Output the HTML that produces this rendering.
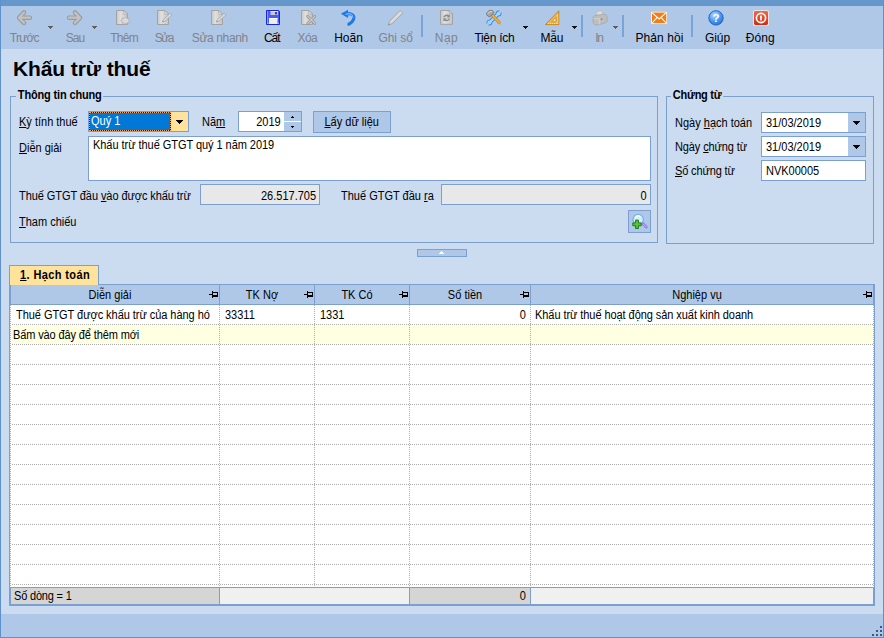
<!DOCTYPE html>
<html lang="vi">
<head>
<meta charset="utf-8">
<title>Khấu trừ thuế</title>
<style>
*{box-sizing:border-box;margin:0;padding:0}
html,body{width:884px;height:638px;overflow:hidden}
body{position:relative;background:#cbdcf1;font-family:"Liberation Sans","DejaVu Sans",sans-serif;font-size:12px;color:#000}
.abs{position:absolute}
#topbar{left:0;top:0;width:884px;height:6px;background:#6597ca}
#toolbar{left:0;top:6px;width:884px;height:43px;background:#afc8e8}
#lborder{left:0;top:0;width:1px;height:638px;background:#5e91c9}
#rborder{left:883px;top:0;width:1px;height:638px;background:#5e91c9}
#bborder{left:0;top:637px;width:884px;height:1px;background:#5e91c9}
#bottombar{left:0;top:614px;width:884px;height:24px;background:#afc8e8}
.tb{position:absolute;top:25px;height:15px;line-height:15px;text-align:center;font-size:12px;color:#000;white-space:nowrap}
.tb.dis{color:#80838a}
.ico{position:absolute;top:4px;width:16px;height:16px;overflow:visible}
.dd{position:absolute;top:20px;width:5px;height:1px;background:#111}
.dd::before{content:"";position:absolute;left:1px;top:1px;width:3px;height:1px;background:inherit}
.dd::after{content:"";position:absolute;left:2px;top:2px;width:1px;height:1px;background:inherit}
.dd.g{background:#5e5e5e}
.sep{position:absolute;top:9px;width:2px;height:22px;background:#7aa3d6}
#title{left:13px;top:55px;font-size:21px;font-weight:bold;line-height:28px;white-space:nowrap;letter-spacing:-0.1px}
.grp{position:absolute;border:1px solid #7ba0cf}
.grp .cap{position:absolute;top:-9px;left:4px;padding:0 2px;background:#cbdcf1;font-weight:bold;font-size:12px;line-height:14px;white-space:nowrap;letter-spacing:-0.05px;transform:scaleX(.9167);transform-origin:0 50%}
.lab{position:absolute;white-space:nowrap;line-height:14px;font-size:12px;transform:scaleX(.9167);transform-origin:0 50%}
.t{display:inline-block;white-space:nowrap;transform:scaleX(.9167);transform-origin:0 50%}
.t.r{transform-origin:100% 50%}
.t.c{transform-origin:50% 50%}
u{text-decoration:underline}
.inp{position:absolute;background:#fff;border:1px solid #7ba0cf;line-height:14px;font-size:12px;white-space:nowrap}
.ro{background:#e8e8e8;text-align:right}

.date .dbtn{left:86px;top:0;width:17px;height:19px;background:#afc8e8}
.date .darr{left:91px;top:8px;width:7px;height:4px}

.hd{height:19px;line-height:19px;text-align:center;font-size:12px;white-space:nowrap;transform:scaleX(.9167);transform-origin:50% 50%}
.cell{height:19px;line-height:19px;font-size:12px;white-space:nowrap;transform:scaleX(.9167);transform-origin:0 50%}
.cell.r{transform-origin:100% 50%}
.hdot{height:1px;background:repeating-linear-gradient(90deg,transparent 0 1px,#adadaf 1px 2px)}
.vdot{width:1px;background:repeating-linear-gradient(180deg,#adadaf 0 1px,transparent 1px 2px)}
</style>
</head>
<body>
<svg width="0" height="0" style="position:absolute">
<defs>
<linearGradient id="gDoc" x1="0" y1="0" x2="1" y2="0"><stop offset="0" stop-color="#c6c6c6"/><stop offset="0.350" stop-color="#e0e0e0"/><stop offset="1" stop-color="#c4c4c4"/></linearGradient>
<linearGradient id="gGrey" x1="0" y1="0" x2="0" y2="1"><stop offset="0" stop-color="#dcdcdc"/><stop offset="1" stop-color="#b8b8b8"/></linearGradient>
<radialGradient id="gHelp" cx="0.4" cy="0.3" r="0.8"><stop offset="0" stop-color="#b4dbff"/><stop offset="0.55" stop-color="#4a97f0"/><stop offset="1" stop-color="#2468cc"/></radialGradient>
<linearGradient id="gRed" x1="0" y1="0" x2="0" y2="1"><stop offset="0" stop-color="#f06a4a"/><stop offset="1" stop-color="#d22a0c"/></linearGradient>
<symbol id="i-back" viewBox="0 0 16 16"><path d="M7 2.400 L1.900 7.700 L7 13 M2.600 7.700 H13" fill="none" stroke="#9c9c9c" stroke-width="4.400" stroke-linecap="round" stroke-linejoin="round"/><path d="M7 2.600 L2.100 7.700 L7 12.800 M2.800 7.700 H13" fill="none" stroke="#c3c3c3" stroke-width="2.200" stroke-linecap="round" stroke-linejoin="round"/></symbol>
<symbol id="i-fwd" viewBox="0 0 16 16"><path d="M8 2.400 L13.100 7.700 L8 13 M12.400 7.700 H2" fill="none" stroke="#9c9c9c" stroke-width="4.400" stroke-linecap="round" stroke-linejoin="round"/><path d="M8 2.600 L12.900 7.700 L8 12.800 M12.200 7.700 H2" fill="none" stroke="#c3c3c3" stroke-width="2.200" stroke-linecap="round" stroke-linejoin="round"/></symbol>
<symbol id="i-doc" viewBox="0 0 16 16" overflow="visible"><path d="M0.500 0.500 H8 L11.500 4 V14.500 H0.500 Z" fill="url(#gDoc)" stroke="#a3a3a3" stroke-width="1"/><path d="M7.800 0.700 V4.200 H11.300 Z" fill="#ececec" stroke="#a9a9a9" stroke-width="0.800" stroke-linejoin="round"/></symbol>
<symbol id="i-add" viewBox="0 0 16 16" overflow="visible"><use href="#i-doc"/><g transform="translate(9.400 10.800) scale(1.250 0.900)"><path d="M0 -4 l1 1.500 1.800-.4 -.4 1.800 1.500 1 -1.500 1 .4 1.800 -1.800-.4 -1 1.500 -1-1.500 -1.800 .4 .4-1.800 -1.500-1 1.500-1 -.4-1.800 1.800 .4z" fill="#dadada" stroke="#b2b2b2" stroke-width="0.700"/></g></symbol>
<symbol id="i-edit" viewBox="0 0 16 16" overflow="visible"><use href="#i-doc"/><path d="M13.200 3.200 L14.900 4.900 L7.800 11.300 L5.600 12 L6.200 9.800 Z" fill="#dcdcdc" stroke="#a6a6a6" stroke-width="0.800" stroke-linejoin="round"/><path d="M5.500 12.100 l1.200-.4 -.8-.8z" fill="#6c6c6c"/></symbol>
<symbol id="i-del" viewBox="0 0 16 16" overflow="visible"><use href="#i-doc"/><path d="M6.600 6.200 L13.800 13.400 M13.800 6.200 L6.600 13.400" fill="none" stroke="#9a9a9a" stroke-width="2.800" stroke-linecap="round"/><path d="M6.600 6.200 L13.800 13.400 M13.800 6.200 L6.600 13.400" fill="none" stroke="#cdcdcd" stroke-width="1.100" stroke-linecap="round"/></symbol>
<symbol id="i-save" viewBox="0 0 16 16" overflow="visible"><path d="M0.500 0.500 H12.600 L13.500 1.400 V14.500 H0.500 Z" fill="#4a5cf6" stroke="#1626d8" stroke-width="1"/><path d="M1.500 1 V14" stroke="#8a98ff" stroke-width="1"/><rect x="4.500" y="1" width="7.500" height="4" fill="#c9c9c9"/><rect x="4.500" y="1" width="7.500" height="1" fill="#e4e4e4"/><rect x="9" y="2" width="2" height="2.400" fill="#2a3ce6"/><rect x="3" y="8" width="8.500" height="6" fill="#eeeeee"/><rect x="3" y="8" width="8.500" height="1" fill="#ffffff"/><rect x="1.500" y="12.800" width="1" height="1" fill="#dfe3ff"/><rect x="11.800" y="12.800" width="1" height="1" fill="#dfe3ff"/></symbol>
<symbol id="i-undo" viewBox="0 0 16 16" overflow="visible"><path d="M4.600 4.600 C8.600 2.400 13.200 4.400 12.800 8.200 C12.500 10.800 10.600 12.600 7.800 14.200" fill="none" stroke="#2279e4" stroke-width="3.200" stroke-linecap="round"/><path d="M-0.200 3.800 L7 -0.200 L7.200 8 Z" fill="#2279e4"/><path d="M5 4.200 C8.400 2.800 11.800 4.200 11.800 7.400" fill="none" stroke="#7fbdff" stroke-width="1.100" stroke-linecap="round"/></symbol>
<symbol id="i-pen" viewBox="0 0 16 16" overflow="visible"><path d="M12 0.400 L14.800 3.200 L4 13.800 L0.300 15 L1.500 11.200 Z" fill="#cfcfcf" stroke="#a6a6a6" stroke-width="0.900" stroke-linejoin="round"/><path d="M0.200 15.100 l1.700-.6 -1.100-1.100z" fill="#7c7c7c"/><path d="M2.800 12.400 L13.400 1.800" stroke="#e4e4e4" stroke-width="1.100"/></symbol>
<symbol id="i-reload" viewBox="0 0 16 16" overflow="visible"><path d="M0.500 0.500 H9.600 L12.500 3.400 V14.300 H0.500 Z" fill="url(#gDoc)" stroke="#a3a3a3" stroke-width="1"/><path d="M9.400 0.700 V3.600 H12.300 Z" fill="#ececec" stroke="#a9a9a9" stroke-width="0.800" stroke-linejoin="round"/><path d="M3.800 7.200 C4.400 5.200 7.400 4.800 8.800 6.200" fill="none" stroke="#8a8a8a" stroke-width="1.500"/><path d="M9.800 4.200 V7.600 H6.600 Z" fill="#8a8a8a"/><path d="M9.400 8.600 C8.800 10.600 5.800 11 4.400 9.600" fill="none" stroke="#8a8a8a" stroke-width="1.500"/><path d="M3.400 11.600 V8.200 H6.600 Z" fill="#8a8a8a"/></symbol>
<symbol id="i-tools" viewBox="0 0 16 16" overflow="visible"><g><path d="M13 3 L3 13" stroke="#2a8cf0" stroke-width="4" stroke-linecap="butt"/><circle cx="12.600" cy="3.400" r="2.900" fill="#2a8cf0"/><circle cx="3.400" cy="12.600" r="2.900" fill="#2a8cf0"/><path d="M13 3 L3 13" stroke="#a9d8ff" stroke-width="2.200"/><circle cx="12.600" cy="3.400" r="2" fill="#a9d8ff"/><circle cx="3.400" cy="12.600" r="2" fill="#a9d8ff"/><path d="M12.400 3.600 L16 0 " stroke="#afc8e8" stroke-width="2"/><path d="M3.600 12.400 L0 16" stroke="#afc8e8" stroke-width="2"/></g><path d="M5 5.400 L6.800 3.800 L14.800 12.600 L13 14.200 Z" fill="#f2ac32" stroke="#c07c14" stroke-width="0.700"/><path d="M0.400 4.600 C0.600 1.800 3.600 -.4 6.400 0.600 L8 2.600 L3.600 7 L2 6 Z" fill="#a7a7a7" stroke="#6a6a6a" stroke-width="0.800" stroke-linejoin="round"/><path d="M1.800 3.800 C2.600 2.200 4.400 1.200 6 1.600" fill="none" stroke="#e0e0e0" stroke-width="1"/></symbol>
<symbol id="i-ruler" viewBox="0 0 16 16" overflow="visible"><path d="M13.800 0.800 V14.600 H0.400 Z" fill="#f2b74c" stroke="#c8881c" stroke-width="1" stroke-linejoin="round"/><path d="M11 7.400 V11.800 H6.600 Z" fill="#dfe9f6" stroke="#c8881c" stroke-width="0.800" stroke-linejoin="round"/><path d="M3 13.600 h9.800 M12.800 13.600 V3.600" fill="none" stroke="#fbe6b0" stroke-width="1" stroke-dasharray="1 1"/></symbol>
<symbol id="i-print" viewBox="0 0 16 16"><path d="M4 1.600 L9.600 0.600 L11.600 5 L5.400 6.400 Z" fill="#dcdcdc" stroke="#b6b6b6" stroke-width="0.8"/><path d="M1 8 C1 6.400 2 5.800 3.400 5.600 L11.400 4.200 C13.600 4 15.200 5.400 15.200 7.400 V10.600 C15.200 11.800 14.400 12.400 13.400 12.800 L6.400 14.800 C3.600 15.400 1 14.400 1 12 Z" fill="#bdbdbd" stroke="#a7a7a7" stroke-width="0.8"/><path d="M1.400 8.200 C3 9 5.600 9 7.200 8.400 L7.200 14.400" fill="none" stroke="#d4d4d4" stroke-width="0.9"/><circle cx="9.600" cy="9.200" r="0.900" fill="#8a8a8a"/></symbol>
<symbol id="i-mail" viewBox="0 0 16 16"><rect x="0.200" y="1.800" width="15.800" height="12.200" fill="#fff4e4"/><rect x="1" y="2.600" width="14.200" height="10.600" fill="#f27d16"/><path d="M1.200 2.800 L8.100 9 L15 2.800 M1.200 13 L6.200 7.400 M15 13 L10 7.400" fill="none" stroke="#fff" stroke-width="1.100"/></symbol>
<symbol id="i-help" viewBox="0 0 16 16"><circle cx="8" cy="7.900" r="7.200" fill="url(#gHelp)" stroke="#1c5fc0" stroke-width="0.9"/><text x="8" y="12" text-anchor="middle" font-family="Liberation Sans, sans-serif" font-weight="bold" font-size="11.500" fill="#fff">?</text></symbol>
<symbol id="i-close" viewBox="0 0 16 16"><rect x="0.200" y="0.200" width="15.600" height="15.600" rx="1.600" fill="#fbe9e2"/><rect x="1" y="1" width="14" height="14" rx="1.400" fill="url(#gRed)"/><circle cx="8" cy="8" r="4.600" fill="none" stroke="#fff" stroke-width="1.700"/><rect x="7.100" y="5.400" width="1.800" height="5.200" rx="0.500" fill="#fff"/></symbol>
</defs></svg>
<div id="topbar" class="abs"></div>
<div id="toolbar" class="abs">
<svg class="ico" style="left:17px" viewBox="0 0 16 16"><use href="#i-back"/></svg>
<div class="tb dis" style="left:-5.69px;width:60px;letter-spacing:-0.77px">Trước</div>
<div class="dd g" style="left:48px"></div>
<svg class="ico" style="left:67px" viewBox="0 0 16 16"><use href="#i-fwd"/></svg>
<div class="tb dis" style="left:45.00px;width:60px;letter-spacing:-1.00px">Sau</div>
<div class="dd g" style="left:92px"></div>
<svg class="ico" style="left:116px" viewBox="0 0 16 16"><use href="#i-add"/></svg>
<div class="tb dis" style="left:94.17px;width:60px;letter-spacing:-0.67px">Thêm</div>
<svg class="ico" style="left:157px" viewBox="0 0 16 16"><use href="#i-edit"/></svg>
<div class="tb dis" style="left:133.75px;width:60px;letter-spacing:-1.50px">Sửa</div>
<svg class="ico" style="left:211px" viewBox="0 0 16 16"><use href="#i-edit"/></svg>
<div class="tb dis" style="left:189.81px;width:60px;letter-spacing:-0.38px">Sửa nhanh</div>
<svg class="ico" style="left:266px" viewBox="0 0 16 16"><use href="#i-save"/></svg>
<div class="tb" style="left:241.80px;width:60px;letter-spacing:-1.00px">Cất</div>
<svg class="ico" style="left:301px" viewBox="0 0 16 16"><use href="#i-del"/></svg>
<div class="tb dis" style="left:277.35px;width:60px;letter-spacing:-0.50px">Xóa</div>
<svg class="ico" style="left:341px" viewBox="0 0 16 16"><use href="#i-undo"/></svg>
<div class="tb" style="left:318.50px;width:60px;letter-spacing:0.00px">Hoãn</div>
<svg class="ico" style="left:388px" viewBox="0 0 16 16"><use href="#i-pen"/></svg>
<div class="tb dis" style="left:365.67px;width:60px;letter-spacing:-0.06px">Ghi sổ</div>
<svg class="ico" style="left:440px" viewBox="0 0 16 16"><use href="#i-reload"/></svg>
<div class="tb dis" style="left:416.53px;width:60px;letter-spacing:0.45px">Nạp</div>
<svg class="ico" style="left:486px" viewBox="0 0 16 16"><use href="#i-tools"/></svg>
<div class="tb" style="left:464.35px;width:60px;letter-spacing:-0.30px">Tiện ích</div>
<div class="dd" style="left:523px"></div>
<svg class="ico" style="left:545px" viewBox="0 0 16 16"><use href="#i-ruler"/></svg>
<div class="tb" style="left:521.85px;width:60px;letter-spacing:-0.30px">Mẫu</div>
<div class="dd" style="left:572px"></div>
<svg class="ico" style="left:592px" viewBox="0 0 16 16"><use href="#i-print"/></svg>
<div class="tb dis" style="left:568.85px;width:60px;letter-spacing:-1.30px">In</div>
<div class="dd g" style="left:613px"></div>
<svg class="ico" style="left:651px" viewBox="0 0 16 16"><use href="#i-mail"/></svg>
<div class="tb" style="left:629.44px;width:60px;letter-spacing:0.07px">Phản hồi</div>
<svg class="ico" style="left:708px" viewBox="0 0 16 16"><use href="#i-help"/></svg>
<div class="tb" style="left:687.47px;width:60px;letter-spacing:-0.07px">Giúp</div>
<svg class="ico" style="left:753px" viewBox="0 0 16 16"><use href="#i-close"/></svg>
<div class="tb" style="left:730.25px;width:60px;letter-spacing:0.10px">Đóng</div>
<div class="sep" style="left:421px"></div>
<div class="sep" style="left:581px"></div>
<div class="sep" style="left:622px"></div>
<div class="sep" style="left:691px"></div>
</div>
<div id="bottombar" class="abs"></div>
<div id="lborder" class="abs"></div>
<div id="rborder" class="abs"></div>
<div id="bborder" class="abs"></div>

<div id="title" class="abs">Khấu trừ thuế</div>

<!-- group: Thông tin chung -->
<div class="grp" style="left:10px;top:96px;width:648px;height:147px"><div class="cap" style="left:5px;letter-spacing:-0.17px">Thông tin chung</div></div>
<div class="lab" style="left:19px;top:115px"><u>K</u>ỳ tính thuế</div>
<div class="inp" id="combo" style="left:88px;top:111px;width:101px;height:21px;border-color:#7ba0cf">
  <div class="abs" style="left:0;top:0;width:82px;height:19px;background:#0078d7;box-shadow:inset 0 0 0 1px #1b1b1b;outline:1px dotted #f9a55c;outline-offset:-1px;color:#fff;padding:2px 0 0 2px;font-size:12px;line-height:14px"><span class="t">Quý 1</span></div>
  <div class="abs" style="left:82px;top:0;width:17px;height:19px;background:#ffe39b"></div>
  <svg class="abs" style="left:87px;top:8px" width="7" height="4" viewBox="0 0 7 4" shape-rendering="crispEdges"><path d="M0 0h7v1h-7zM1 1h5v1h-5zM2 2h3v1h-3zM3 3h1v1h-1z" fill="#000"/></svg>
</div>
<div class="lab" style="left:202px;top:115px">Nă<u>m</u></div>
<div class="inp" id="spin" style="left:238px;top:111px;width:64px;height:21px">
  <div class="abs" style="left:0;top:3px;width:42px;text-align:right;line-height:14px"><span class="t r">2019</span></div>
  <div class="abs" style="left:45px;top:0;width:17px;height:19px;background:#afc8e8"></div>
  <div class="abs" style="left:45px;top:9px;width:17px;height:1px;background:#fff"></div>
  <div class="abs" style="left:53px;top:4px;width:1px;height:1px;background:#000"></div>
  <div class="abs" style="left:52px;top:5px;width:3px;height:1px;background:#000"></div>
  <div class="abs" style="left:52px;top:14px;width:3px;height:1px;background:#000"></div>
  <div class="abs" style="left:53px;top:15px;width:1px;height:1px;background:#000"></div>
</div>
<div class="abs" id="btnLay" style="left:313px;top:111px;width:78px;height:22px;background:#afc8e8;border:1px solid #7ba0cf;text-align:center;line-height:21px;font-size:12px;white-space:nowrap"><span class="t c"><u>L</u>ấy dữ liệu</span></div>

<div class="lab" style="left:19px;top:141px"><u>D</u>iễn giải</div>
<div class="inp" id="ta" style="left:88px;top:136px;width:563px;height:45px;padding:1px 0 0 4px;line-height:14px;letter-spacing:-0.05px"><span class="t">Khấu trừ thuế GTGT quý 1 năm 2019</span></div>

<div class="lab" style="left:19px;top:189px;letter-spacing:-0.08px">Thuế GTGT đầu <u>v</u>ào được khấu trừ</div>
<div class="inp ro" style="left:200px;top:184px;width:120px;height:21px;padding:4px 3px 0 0"><span class="t r">26.517.705</span></div>
<div class="lab" style="left:341px;top:189px">Thuế GTGT đầu <u>r</u>a</div>
<div class="inp ro" style="left:441px;top:184px;width:210px;height:21px;padding:4px 3px 0 0"><span class="t r">0</span></div>

<div class="lab" style="left:19px;top:215px"><u>T</u>ham chiếu</div>
<div class="abs" id="btnRef" style="left:628px;top:210px;width:23px;height:23px;background:#afc8e8;border:1px solid #7ba0cf">
<svg class="abs" style="left:2px;top:2px" width="18" height="18" viewBox="0 0 18 18">
<circle cx="7.200" cy="6.600" r="5.200" fill="#d4ecff" stroke="#6fb0f0" stroke-width="1.200"/>
<path d="M4.200 4.400 C5.200 2.800 7.800 2.400 9.400 3.400" fill="none" stroke="#fff" stroke-width="1.200"/>
<path d="M12 10.800 L15.200 14" stroke="#8f7fe0" stroke-width="3" stroke-linecap="round"/>
<path d="M12.200 11 L15 13.800" stroke="#c8c0f4" stroke-width="1" stroke-linecap="round"/>
<path d="M4.600 6.200 H7.400 V9 H10.200 V11.800 H7.400 V14.600 H4.600 V11.800 H1.800 V9 H4.600 Z" transform="translate(0 0.900)" fill="#58c63a" stroke="#1e7a12" stroke-width="1"/>
</svg>
</div>

<!-- group: Chứng từ -->
<div class="grp" style="left:666px;top:96px;width:208px;height:148px"><div class="cap" style="letter-spacing:-0.3px">Chứng từ</div></div>
<div class="lab" style="left:675px;top:116px">Ngày <u>h</u>ạch toán</div>
<div class="inp date" style="left:761px;top:112px;width:105px;height:21px"><span class="abs t" style="left:4px;top:3px">31/03/2019</span><div class="abs dbtn"></div><svg class="abs darr" viewBox="0 0 7 4" shape-rendering="crispEdges"><path d="M0 0h7v1h-7zM1 1h5v1h-5zM2 2h3v1h-3zM3 3h1v1h-1z" fill="#000"/></svg></div>
<div class="lab" style="left:675px;top:140px;letter-spacing:-0.12px">Ngày <u>c</u>hứng từ</div>
<div class="inp date" style="left:761px;top:136px;width:105px;height:21px"><span class="abs t" style="left:4px;top:3px">31/03/2019</span><div class="abs dbtn"></div><svg class="abs darr" viewBox="0 0 7 4" shape-rendering="crispEdges"><path d="M0 0h7v1h-7zM1 1h5v1h-5zM2 2h3v1h-3zM3 3h1v1h-1z" fill="#000"/></svg></div>
<div class="lab" style="left:675px;top:164px;letter-spacing:-0.15px"><u>S</u>ố chứng từ</div>
<div class="inp" style="left:761px;top:160px;width:105px;height:21px"><span class="abs t" style="left:4px;top:3px">NVK00005</span></div>

<!-- collapse handle -->
<div class="abs" style="left:417px;top:249px;width:50px;height:8px;background:#afc8e8;border:1px solid #7ba0cf"></div>
<svg class="abs" style="left:439px;top:251px" width="5" height="3" viewBox="0 0 5 3" shape-rendering="crispEdges"><path d="M2 0h1v1h-1zM1 1h3v1h-3zM0 2h5v1h-5z" fill="#fff"/></svg>

<!-- tab -->
<div class="abs" id="tab" style="left:9px;top:265px;z-index:2;width:90px;height:20px;background:#ffe39b;border:1px solid #7ba0cf;border-bottom:none;font-weight:bold;font-size:12px;line-height:14px;padding:2px 0 0 10px;white-space:nowrap;letter-spacing:0.42px"><span class="t"><u>1</u>. Hạch toán</span></div>

<!-- grid -->
<div class="abs" id="grid" style="left:9px;top:284px;width:866px;height:322px;background:#fff;border:1px solid #7ba0cf;border-left:2px solid #7ba0cf;border-bottom:2px solid #7ba0cf"></div>
<div class="abs" style="left:11px;top:285px;width:863px;height:19px;background:#afc8e8"></div>
<div class="abs" style="left:11px;top:304px;width:863px;height:1px;background:#7ba0cf"></div>
<div class="abs" style="left:11px;top:325px;width:862px;height:19px;background:#ffffe1"></div>
<div class="abs" style="left:219px;top:285px;width:1px;height:19px;background:#7ba0cf"></div>
<div class="abs vdot" style="left:219px;top:305px;height:282px"></div>
<div class="abs" style="left:314px;top:285px;width:1px;height:19px;background:#7ba0cf"></div>
<div class="abs vdot" style="left:314px;top:305px;height:282px"></div>
<div class="abs" style="left:409px;top:285px;width:1px;height:19px;background:#7ba0cf"></div>
<div class="abs vdot" style="left:409px;top:305px;height:282px"></div>
<div class="abs" style="left:530px;top:285px;width:1px;height:19px;background:#7ba0cf"></div>
<div class="abs vdot" style="left:530px;top:305px;height:282px"></div>
<div class="abs" style="left:873px;top:285px;width:1px;height:19px;background:#7ba0cf"></div>
<div class="abs vdot" style="left:873px;top:305px;height:282px"></div>
<div class="abs vdot" style="left:10px;top:305px;height:282px;background-color:#fff"></div>
<div class="abs hd" style="left:11px;top:286px;width:198px">Diễn giải</div>
<svg class="abs" style="left:209px;top:291px" width="9" height="7" viewBox="0 0 9 7" shape-rendering="crispEdges"><path d="M0 3.500 H3 M3.500 0 V7 M4 1.500 H8 M4 4.500 H8.500 M4 5.500 H8.500 M8.500 1 V6" fill="none" stroke="#000" stroke-width="1"/></svg>
<div class="abs hd" style="left:220px;top:286px;width:84px">TK Nợ</div>
<svg class="abs" style="left:304px;top:291px" width="9" height="7" viewBox="0 0 9 7" shape-rendering="crispEdges"><path d="M0 3.500 H3 M3.500 0 V7 M4 1.500 H8 M4 4.500 H8.500 M4 5.500 H8.500 M8.500 1 V6" fill="none" stroke="#000" stroke-width="1"/></svg>
<div class="abs hd" style="left:315px;top:286px;width:84px">TK Có</div>
<svg class="abs" style="left:399px;top:291px" width="9" height="7" viewBox="0 0 9 7" shape-rendering="crispEdges"><path d="M0 3.500 H3 M3.500 0 V7 M4 1.500 H8 M4 4.500 H8.500 M4 5.500 H8.500 M8.500 1 V6" fill="none" stroke="#000" stroke-width="1"/></svg>
<div class="abs hd" style="left:410px;top:286px;width:110px">Số tiền</div>
<svg class="abs" style="left:520px;top:291px" width="9" height="7" viewBox="0 0 9 7" shape-rendering="crispEdges"><path d="M0 3.500 H3 M3.500 0 V7 M4 1.500 H8 M4 4.500 H8.500 M4 5.500 H8.500 M8.500 1 V6" fill="none" stroke="#000" stroke-width="1"/></svg>
<div class="abs hd" style="left:531px;top:286px;width:332px">Nghiệp vụ</div>
<svg class="abs" style="left:863px;top:291px" width="9" height="7" viewBox="0 0 9 7" shape-rendering="crispEdges"><path d="M0 3.500 H3 M3.500 0 V7 M4 1.500 H8 M4 4.500 H8.500 M4 5.500 H8.500 M8.500 1 V6" fill="none" stroke="#000" stroke-width="1"/></svg>
<div class="abs hdot" style="left:11px;top:324px;width:862px"></div>
<div class="abs hdot" style="left:11px;top:344px;width:862px"></div>
<div class="abs hdot" style="left:11px;top:364px;width:862px"></div>
<div class="abs hdot" style="left:11px;top:384px;width:862px"></div>
<div class="abs hdot" style="left:11px;top:404px;width:862px"></div>
<div class="abs hdot" style="left:11px;top:424px;width:862px"></div>
<div class="abs hdot" style="left:11px;top:444px;width:862px"></div>
<div class="abs hdot" style="left:11px;top:464px;width:862px"></div>
<div class="abs hdot" style="left:11px;top:484px;width:862px"></div>
<div class="abs hdot" style="left:11px;top:504px;width:862px"></div>
<div class="abs hdot" style="left:11px;top:524px;width:862px"></div>
<div class="abs hdot" style="left:11px;top:544px;width:862px"></div>
<div class="abs hdot" style="left:11px;top:564px;width:862px"></div>
<div class="abs hdot" style="left:11px;top:584px;width:862px"></div>
<div class="abs cell" style="left:16px;top:306px;width:220px;overflow:hidden;letter-spacing:-0.05px">Thuế GTGT được khấu trừ của hàng hó</div>
<div class="abs cell" style="left:225px;top:306px">33311</div>
<div class="abs cell" style="left:320px;top:306px">1331</div>
<div class="abs cell r" style="left:410px;top:306px;width:116px;text-align:right">0</div>
<div class="abs cell" style="left:535px;top:306px;letter-spacing:-0.07px">Khấu trừ thuế hoạt động sản xuất kinh doanh</div>
<div class="abs cell" style="left:13px;top:326px;letter-spacing:-0.13px">Bấm vào đây để thêm mới</div>
<div class="abs" style="left:11px;top:587px;width:863px;height:1px;background:#7ba0cf"></div>
<div class="abs" style="left:11px;top:588px;width:208px;height:16px;background:#d5d5d5"></div>
<div class="abs" style="left:220px;top:588px;width:189px;height:16px;background:#f0f0f0"></div>
<div class="abs" style="left:410px;top:588px;width:120px;height:16px;background:#d5d5d5"></div>
<div class="abs" style="left:531px;top:588px;width:342px;height:16px;background:#f0f0f0"></div>
<div class="abs" style="left:219px;top:588px;width:1px;height:16px;background:#7ba0cf"></div>
<div class="abs" style="left:409px;top:588px;width:1px;height:16px;background:#7ba0cf"></div>
<div class="abs" style="left:530px;top:588px;width:1px;height:16px;background:#7ba0cf"></div>
<div class="abs" style="left:873px;top:588px;width:1px;height:16px;background:#7ba0cf"></div>
<div class="abs cell" style="left:14px;top:588px;height:16px;line-height:16px;letter-spacing:-0.2px">Số dòng = 1</div>
<div class="abs cell r" style="left:410px;top:588px;height:16px;line-height:16px;width:116px;text-align:right">0</div>
<div class="abs" style="left:880px;top:626px;width:2px;height:2px;background:#3f5582"></div>
<div class="abs" style="left:876px;top:630px;width:2px;height:2px;background:#3f5582"></div>
<div class="abs" style="left:880px;top:630px;width:2px;height:2px;background:#3f5582"></div>
<div class="abs" style="left:872px;top:634px;width:2px;height:2px;background:#3f5582"></div>
<div class="abs" style="left:876px;top:634px;width:2px;height:2px;background:#3f5582"></div>
<div class="abs" style="left:880px;top:634px;width:2px;height:2px;background:#3f5582"></div>
</body>
</html>
